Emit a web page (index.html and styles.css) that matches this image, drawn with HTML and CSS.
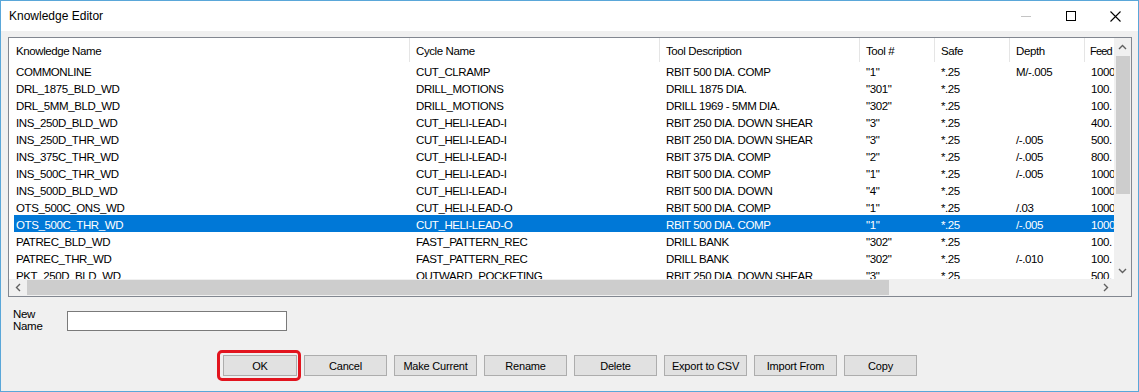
FILE: index.html
```html
<!DOCTYPE html>
<html>
<head>
<meta charset="utf-8">
<link rel="stylesheet" href="styles.css">
</head>
<body>
<div class="window">
  <div class="titlebar">
    <span class="title">Knowledge Editor</span>
    <div class="controls">
      <span class="ctl"><svg width="10" height="10" viewBox="0 0 10 10"><line x1="0" y1="5.5" x2="10" y2="5.5" stroke="#c4c4c4" stroke-width="1"/></svg></span>
      <span class="ctl"><svg width="10" height="10" viewBox="0 0 10 10"><rect x="0.5" y="0.5" width="9" height="9" fill="none" stroke="#000" stroke-width="1"/></svg></span>
      <span class="ctl"><svg width="11" height="11" viewBox="0 0 11 11"><path d="M0.5 0.5 L10.5 10.5 M10.5 0.5 L0.5 10.5" stroke="#000" stroke-width="1.1" fill="none"/></svg></span>
    </div>
  </div>
  <div class="body">
    <div class="list">
      <div class="viewport">
        <div class="hdr">
          <div class="hc c1">Knowledge Name</div>
          <div class="hc c2">Cycle Name</div>
          <div class="hc c3">Tool Description</div>
          <div class="hc c4">Tool #</div>
          <div class="hc c5">Safe</div>
          <div class="hc c6">Depth</div>
          <div class="hc c7 feed">Feed</div>
        </div>
        <div class="row"><div class="rc c1">COMMONLINE</div><div class="rc c2">CUT_CLRAMP</div><div class="rc c3">RBIT 500 DIA. COMP</div><div class="rc c4">"1"</div><div class="rc c5">*.25</div><div class="rc c6">M/-.005</div><div class="rc c7">1000</div></div>
        <div class="row"><div class="rc c1">DRL_1875_BLD_WD</div><div class="rc c2">DRILL_MOTIONS</div><div class="rc c3">DRILL 1875 DIA.</div><div class="rc c4">"301"</div><div class="rc c5">*.25</div><div class="rc c6"></div><div class="rc c7">100.</div></div>
        <div class="row"><div class="rc c1">DRL_5MM_BLD_WD</div><div class="rc c2">DRILL_MOTIONS</div><div class="rc c3">DRILL 1969 - 5MM DIA.</div><div class="rc c4">"302"</div><div class="rc c5">*.25</div><div class="rc c6"></div><div class="rc c7">100.</div></div>
        <div class="row"><div class="rc c1">INS_250D_BLD_WD</div><div class="rc c2">CUT_HELI-LEAD-I</div><div class="rc c3">RBIT 250 DIA. DOWN SHEAR</div><div class="rc c4">"3"</div><div class="rc c5">*.25</div><div class="rc c6"></div><div class="rc c7">400.</div></div>
        <div class="row"><div class="rc c1">INS_250D_THR_WD</div><div class="rc c2">CUT_HELI-LEAD-I</div><div class="rc c3">RBIT 250 DIA. DOWN SHEAR</div><div class="rc c4">"3"</div><div class="rc c5">*.25</div><div class="rc c6">/-.005</div><div class="rc c7">500.</div></div>
        <div class="row"><div class="rc c1">INS_375C_THR_WD</div><div class="rc c2">CUT_HELI-LEAD-I</div><div class="rc c3">RBIT 375 DIA. COMP</div><div class="rc c4">"2"</div><div class="rc c5">*.25</div><div class="rc c6">/-.005</div><div class="rc c7">800.</div></div>
        <div class="row"><div class="rc c1">INS_500C_THR_WD</div><div class="rc c2">CUT_HELI-LEAD-I</div><div class="rc c3">RBIT 500 DIA. COMP</div><div class="rc c4">"1"</div><div class="rc c5">*.25</div><div class="rc c6">/-.005</div><div class="rc c7">1000</div></div>
        <div class="row"><div class="rc c1">INS_500D_BLD_WD</div><div class="rc c2">CUT_HELI-LEAD-I</div><div class="rc c3">RBIT 500 DIA. DOWN</div><div class="rc c4">"4"</div><div class="rc c5">*.25</div><div class="rc c6"></div><div class="rc c7">1000</div></div>
        <div class="row"><div class="rc c1">OTS_500C_ONS_WD</div><div class="rc c2">CUT_HELI-LEAD-O</div><div class="rc c3">RBIT 500 DIA. COMP</div><div class="rc c4">"1"</div><div class="rc c5">*.25</div><div class="rc c6">/.03</div><div class="rc c7">1000</div></div>
        <div class="row sel"><div class="rc c1">OTS_500C_THR_WD</div><div class="rc c2">CUT_HELI-LEAD-O</div><div class="rc c3">RBIT 500 DIA. COMP</div><div class="rc c4">"1"</div><div class="rc c5">*.25</div><div class="rc c6">/-.005</div><div class="rc c7">1000</div></div>
        <div class="row"><div class="rc c1">PATREC_BLD_WD</div><div class="rc c2">FAST_PATTERN_REC</div><div class="rc c3">DRILL BANK</div><div class="rc c4">"302"</div><div class="rc c5">*.25</div><div class="rc c6"></div><div class="rc c7">100.</div></div>
        <div class="row"><div class="rc c1">PATREC_THR_WD</div><div class="rc c2">FAST_PATTERN_REC</div><div class="rc c3">DRILL BANK</div><div class="rc c4">"302"</div><div class="rc c5">*.25</div><div class="rc c6">/-.010</div><div class="rc c7">100.</div></div>
        <div class="row"><div class="rc c1">PKT_250D_BLD_WD</div><div class="rc c2">OUTWARD_POCKETING</div><div class="rc c3">RBIT 250 DIA. DOWN SHEAR</div><div class="rc c4">"3"</div><div class="rc c5">*.25</div><div class="rc c6"></div><div class="rc c7">500.</div></div>
      </div>
      <div class="vscroll">
        <span class="arrow"><svg width="9" height="6" viewBox="0 0 9 6"><polyline points="1,5 4.5,1.5 8,5" fill="none" stroke="#606060" stroke-width="1.4"/></svg></span>
        <span class="vthumb"></span>
        <span class="spacer"></span>
        <span class="arrow"><svg width="9" height="6" viewBox="0 0 9 6"><polyline points="1,1 4.5,4.5 8,1" fill="none" stroke="#606060" stroke-width="1.4"/></svg></span>
      </div>
      <div class="hscroll">
        <span class="arrow"><svg width="6" height="9" viewBox="0 0 6 9"><polyline points="5,1 1.5,4.5 5,8" fill="none" stroke="#606060" stroke-width="1.4"/></svg></span>
        <span class="hthumb"></span>
        <span class="spacer"></span>
        <span class="arrow"><svg width="6" height="9" viewBox="0 0 6 9"><polyline points="1,1 4.5,4.5 1,8" fill="none" stroke="#606060" stroke-width="1.4"/></svg></span>
      </div>
      <div class="corner"></div>
    </div>
    <div class="namerow">
      <div class="namelabel">New<br>Name</div>
      <div class="textbox"></div>
    </div>
    <div class="buttons">
      <div class="okwrap"><div class="btn w74">OK</div><div class="hl"></div></div>
      <div class="btn">Cancel</div>
      <div class="btn">Make Current</div>
      <div class="btn">Rename</div>
      <div class="btn">Delete</div>
      <div class="btn">Export to CSV</div>
      <div class="btn">Import From</div>
      <div class="btn w73">Copy</div>
    </div>
  </div>
</div>
</body>
</html>
```

FILE: styles.css
```css
html, body {
  margin: 0;
  padding: 0;
  width: 1139px;
  height: 392px;
  overflow: hidden;
  background: #f0f0f0;
}

.window {
  width: 1139px;
  height: 392px;
  box-sizing: border-box;
  border: 1px solid #5aa7d9;
  background: #f0f0f0;
  display: flex;
  flex-direction: column;
  font-family: "Liberation Sans", Arial, sans-serif;
  color: #000;
}

.titlebar {
  height: 30px;
  flex: none;
  background: #fff;
  display: flex;
  align-items: center;
}

.title {
  padding-left: 8px;
  font-size: 12px;
}

.controls {
  margin-left: auto;
  display: flex;
  height: 100%;
}

.ctl {
  width: 45px;
  display: flex;
  align-items: center;
  justify-content: center;
}

.body {
  flex: 1;
  padding: 6px 6px 0 7px;
}

.list {
  width: 1124px;
  height: 260px;
  box-sizing: border-box;
  border: 1px solid #828790;
  background: #fff;
  display: grid;
  grid-template-columns: 1105px 17px;
  grid-template-rows: 241px 17px;
}

.viewport {
  overflow: hidden;
  font-size: 11.5px;
  letter-spacing: -0.4px;
}

.hdr {
  display: flex;
  height: 24px;
  white-space: nowrap;
}

.hc {
  flex: none;
  box-sizing: border-box;
  height: 24px;
  display: flex;
  align-items: center;
  padding-left: 6px;
  padding-top: 2px;
  border-right: 1px solid #e5e5e5;
}

.hdr .c1 { width: 401px; padding-left: 7px; }
.c2 { width: 250px; }
.c3 { width: 200px; }
.c4 { width: 75px; }
.c5 { width: 75px; }
.c6 { width: 75px; }
.c7 { width: 100px; }

.hc.feed {
  padding-left: 5px;
  font-size: 11px;
  letter-spacing: -0.8px;
}

.row {
  display: flex;
  height: 17px;
  margin-left: 5px;
  white-space: nowrap;
}

.rc {
  flex: none;
  box-sizing: border-box;
  padding-left: 6px;
  padding-top: 2px;
  height: 17px;
  line-height: 16px;
  overflow: hidden;
}

.row .c1 { width: 396px; padding-left: 2px; }

.row.sel {
  background: #0078d7;
  color: #fff;
}

.vscroll {
  background: #f0f0f0;
  display: flex;
  flex-direction: column;
}

.hscroll {
  background: #f0f0f0;
  display: flex;
}

.arrow {
  width: 17px;
  height: 17px;
  flex: none;
  display: flex;
  align-items: center;
  justify-content: center;
}

.vthumb {
  flex: none;
  height: 138px;
  margin: 1px 1px 0 2px;
  background: #cdcdcd;
}

.hthumb {
  flex: none;
  width: 862px;
  margin: 1px 0 1px 1px;
  background: #cdcdcd;
}

.spacer {
  flex: 1;
}

.corner {
  background: #f0f0f0;
}

.namerow {
  display: flex;
  margin-top: 14px;
  height: 20px;
}

.namelabel {
  width: 54px;
  margin-left: 5px;
  margin-top: -3px;
  font-size: 11.5px;
  letter-spacing: -0.3px;
  line-height: 12px;
}

.textbox {
  width: 220px;
  height: 20px;
  box-sizing: border-box;
  border: 1px solid #7a7a7a;
  background: #fff;
}

.buttons {
  display: flex;
  gap: 7px;
  margin-top: 24px;
  padding-left: 215px;
}

.btn {
  width: 83px;
  height: 21px;
  box-sizing: border-box;
  border: 1px solid #adadad;
  background: #e1e1e1;
  font-size: 11px;
  letter-spacing: -0.2px;
  display: flex;
  align-items: center;
  justify-content: center;
}

.btn.w74 { width: 74px; }
.btn.w73 { width: 73px; }

.okwrap {
  position: relative;
}

.hl {
  position: absolute;
  top: -5px;
  bottom: -5px;
  left: -6px;
  right: -4px;
  border: 3px solid #e2141e;
  border-radius: 5px;
}
```
